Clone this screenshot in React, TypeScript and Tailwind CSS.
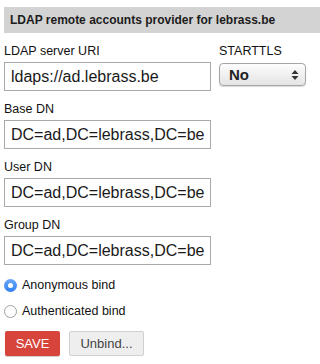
import React from "react";

function Field({ label, value }: { label: string; value: string }) {
  return (
    <div className="mt-[11px]">
      <div className="text-[12.5px] leading-[15px] text-[#111]">{label}</div>
      <div className="mt-[3px] flex h-[29px] w-[207px] items-center border border-[#a9a9a9] bg-white pl-[6px] text-[16px] leading-none text-[#1a1a1a]">
        {value}
      </div>
    </div>
  );
}

export default function App() {
  return (
    <div className="h-[364px] w-[320px] overflow-hidden bg-white pl-[4px] pt-[7px] font-['Liberation_Sans',Arial,sans-serif]">
      <div className="flex h-[26px] items-center bg-[#d3d3d3] pl-[6px] text-[12px] font-bold text-[#1c1c1c]">
        LDAP remote accounts provider for lebrass.be
      </div>

      <div className="mt-[11px] flex">
        <div>
          <div className="text-[12.5px] leading-[15px] text-[#111]">LDAP server URI</div>
          <div className="mt-[3px] flex h-[29px] w-[207px] items-center border border-[#a9a9a9] bg-white pl-[6px] text-[16px] leading-none text-[#1a1a1a]">
            ldaps://ad.lebrass.be
          </div>
        </div>
        <div className="ml-[8px]">
          <div className="text-[12.5px] leading-[15px] text-[#111]">STARTTLS</div>
          <div className="mt-[4px] flex h-[23px] w-[87px] items-center justify-between rounded-[4px] border border-[#a6a6a6] bg-gradient-to-b from-[#fdfdfd] to-[#e4e4e4] pl-[9px] pr-[6px] text-[15px] font-bold leading-none text-[#222] shadow-[0_1px_1px_rgba(0,0,0,0.15)]">
            <span>No</span>
            <svg width="8" height="12" viewBox="0 0 8 12">
              <path d="M4 1 L7.5 5 H0.5 Z" fill="#333" />
              <path d="M4 11 L7.5 7 H0.5 Z" fill="#333" />
            </svg>
          </div>
        </div>
      </div>

      <Field label="Base DN" value="DC=ad,DC=lebrass,DC=be" />
      <Field label="User DN" value="DC=ad,DC=lebrass,DC=be" />
      <Field label="Group DN" value="DC=ad,DC=lebrass,DC=be" />

      <div className="mt-[12px] flex h-[16px] items-center text-[12.5px] text-[#111]">
        <span className="flex h-[13px] w-[13px] items-center justify-center rounded-full bg-gradient-to-b from-[#6aa8f7] to-[#2f7ff0]">
          <span className="h-[5px] w-[5px] rounded-full bg-white" />
        </span>
        <span className="ml-[5px]">Anonymous bind</span>
      </div>
      <div className="mt-[10px] flex h-[16px] items-center text-[12.5px] text-[#111]">
        <span className="h-[13px] w-[13px] rounded-full border border-[#a0a0a0] bg-white" />
        <span className="ml-[5px]">Authenticated bind</span>
      </div>

      <div className="mt-[12px] flex gap-[9px] pl-[1px]">
        <button className="h-[25px] w-[55px] rounded-[2px] bg-[#d6443b] text-[13px] leading-none text-white shadow-[0_1px_1px_rgba(0,0,0,0.2)]">
          SAVE
        </button>
        <button className="h-[25px] w-[75px] rounded-[2px] border border-[#d0d0d0] bg-[#eeeeee] text-[13px] leading-none text-[#444]">
          Unbind...
        </button>
      </div>
    </div>
  );
}
